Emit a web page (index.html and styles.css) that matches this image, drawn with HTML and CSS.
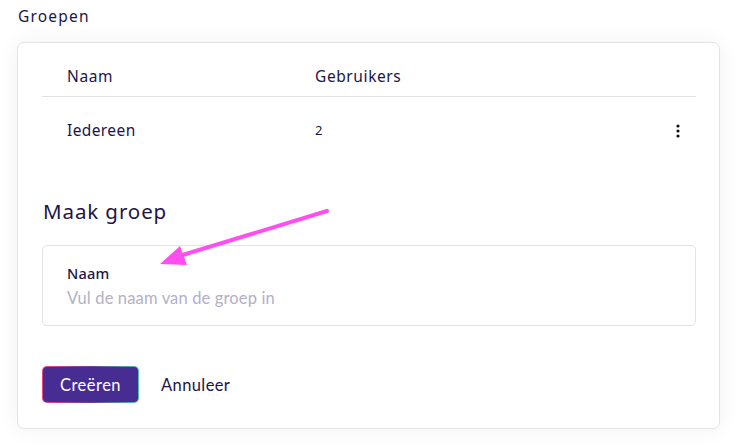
FILE: index.html
```html
<!DOCTYPE html>
<html lang="nl">
<head>
<meta charset="utf-8">
<title>Groepen</title>
<link rel="stylesheet" href="styles.css">
</head>
<body>
<h2 class="page-title">Groepen</h2>
<section class="card">
  <div class="table">
    <div class="thead">
      <div class="cell col-name">Naam</div>
      <div class="cell col-users">Gebruikers</div>
    </div>
    <div class="trow">
      <div class="cell col-name">Iedereen</div>
      <div class="cell col-users num">2</div>
      <div class="cell col-menu">
        <svg width="4" height="14" viewBox="0 0 4 14"><circle cx="2" cy="2" r="1.6" fill="#111"/><circle cx="2" cy="7" r="1.6" fill="#111"/><circle cx="2" cy="12" r="1.6" fill="#111"/></svg>
      </div>
    </div>
  </div>
  <h3 class="form-title">Maak groep</h3>
  <label class="field">
    <span class="field-label">Naam</span>
    <span class="field-placeholder">Vul de naam van de groep in</span>
  </label>
  <div class="actions">
    <button class="btn-primary">Creëren</button>
    <button class="btn-link">Annuleer</button>
  </div>
</section>
<svg class="annotation" width="744" height="448" viewBox="0 0 744 448">
  <line x1="327" y1="211" x2="176" y2="257" stroke="#ff4df0" stroke-width="4" stroke-linecap="round"/>
  <polygon points="160,264 180,246 187,265" fill="#ff4df0"/>
</svg>
</body>
</html>
```
FILE: styles.css
```css
* { box-sizing: border-box; }
html, body { margin: 0; padding: 0; background: #fff; }
body {
  width: 744px;
  height: 448px;
  overflow: hidden;
  position: relative;
  font-family: "Noto Sans", "Open Sans", sans-serif;
  color: #1c1549;
}
.page-title {
  margin: 0;
  padding: 5px 0 0 18px;
  height: 42px;
  font-size: 15.5px;
  font-weight: 400;
  letter-spacing: 1.2px;
  line-height: 22px;
}
.card {
  margin-left: 17px;
  width: 703px;
  height: 387px;
  border: 1px solid #e3e3e6;
  border-radius: 7px;
  background: #fff;
  box-shadow: 0 0 22px rgba(0,0,0,0.06);
  padding: 0 23px 0 24px;
  display: flex;
  flex-direction: column;
}
.table { display: flex; flex-direction: column; }
.thead, .trow { display: flex; align-items: center; }
.thead {
  height: 54px;
  padding-top: 13px;
  border-bottom: 1px solid #e2e2e6;
  font-size: 15.5px;
  letter-spacing: 0.6px;
}
.trow { height: 66px; font-size: 15.5px; letter-spacing: 0.4px; }
.cell { line-height: 20px; }
.col-name { width: 273px; padding-left: 25px; }
.col-users { flex: 1; }
.num { font-size: 13px; }
.col-menu { width: 30px; display: flex; justify-content: flex-start; padding-left: 10px; padding-top: 2px; }
.form-title {
  margin: 34px 0 0 1px;
  font-size: 20.5px;
  font-weight: 400;
  line-height: 28px;
  letter-spacing: 0.9px;
}
.field {
  margin-top: 20px;
  height: 81px;
  border: 1px solid #e1e0ec;
  border-radius: 5px;
  padding: 17px 0 0 24px;
  display: flex;
  flex-direction: column;
  font-family: "Lato", "Noto Sans", sans-serif;
}
.field-label { font-family: "Noto Sans", sans-serif; font-size: 14.5px; font-weight: 500; line-height: 20px; color: #1c1549; letter-spacing: 0.2px; }
.field-placeholder { margin-top: 5px; font-size: 16.5px; line-height: 20px; color: #b3b0c8; font-weight: 400; letter-spacing: 0.15px; }
.actions {
  margin-top: 40px;
  display: flex;
  align-items: center;
  gap: 22px;
}
.btn-primary {
  width: 97px;
  height: 37px;
  border: 1.5px solid transparent;
  border-radius: 5px;
  background: linear-gradient(#472c91, #472c91) padding-box, linear-gradient(90deg, #ee4a86, #6a3fa0 50%, #4cc3ac) border-box;
  color: #fff;
  font-family: "Lato", "Noto Sans", sans-serif;
  font-size: 16.5px;
  letter-spacing: 0.5px;
  padding: 0;
}
.btn-link {
  border: 0;
  background: none;
  padding: 0;
  color: #1c1549;
  font-family: "Lato", "Noto Sans", sans-serif;
  font-size: 16.5px;
  letter-spacing: 0.4px;
}
.annotation { position: absolute; left: 0; top: 0; pointer-events: none; }
```
